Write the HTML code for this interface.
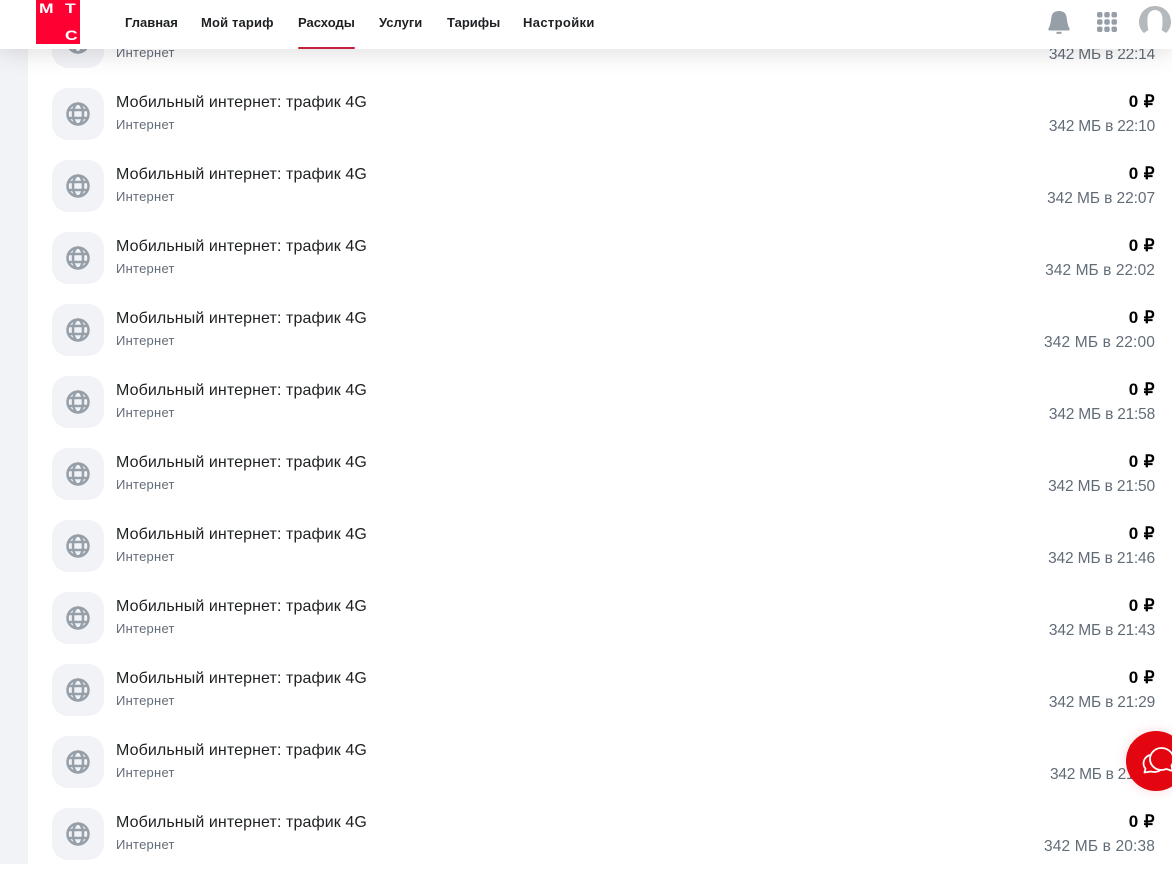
<!DOCTYPE html>
<html lang="ru">
<head>
<meta charset="utf-8">
<title>Расходы</title>
<style>
html,body{margin:0;padding:0;width:1172px;height:864px;overflow:hidden;background:#fff;font-family:"Liberation Sans",sans-serif}
#strip{position:absolute;left:0;top:0;width:28px;height:864px;background:#f2f3f7}
.row{position:absolute;left:0;width:1172px;height:72px}
.ic{position:absolute;left:52px;top:0;width:52px;height:52px;border-radius:16px;background:#f2f3f7}
.ic svg{position:absolute;left:14px;top:14px}
.t{position:absolute;left:116px;top:5px;font-size:16px;line-height:20px;letter-spacing:.1px;color:#1d2023;white-space:nowrap}
.s{position:absolute;left:116px;top:28px;font-size:13px;line-height:18px;letter-spacing:.25px;color:#626c77;white-space:nowrap}
.a{position:absolute;right:17px;top:4px;font-size:17px;line-height:20px;letter-spacing:.4px;font-weight:bold;color:#000;white-space:nowrap}
.m{position:absolute;right:17px;top:29px;font-size:15.5px;line-height:20px;color:#626c77;white-space:nowrap}
#hd{position:absolute;left:0;top:0;width:1172px;height:49px;background:#fff;box-shadow:0 4px 24px rgba(0,0,0,.13)}
#logo{position:absolute;left:36px;top:0;width:44px;height:44px;background:#ff0032;color:#fff;font-weight:bold;font-size:14px;line-height:15px;overflow:hidden}
#logo span{position:absolute;transform:scaleX(1.25);transform-origin:left top}
.n{position:absolute;top:14px;font-size:13px;line-height:18px;font-weight:bold;color:#1d2023;white-space:nowrap}
#ul{position:absolute;left:298px;top:47px;width:57px;height:2px;background:#c5213f;border-radius:1px}
#chat{position:absolute;left:1126px;top:731px;width:60px;height:60px;border-radius:50%;background:#e30611;box-shadow:0 0 12px rgba(227,6,17,.15)}
</style>
</head>
<body>
<div id="strip"></div>

<div class="row" style="top:16px"><div class="ic"><svg width="24" height="24" viewBox="0 0 24 24" fill="none" stroke="#969fa8" stroke-width="2.500"><circle cx="12" cy="12" r="10.500"/><ellipse cx="12" cy="12" rx="5" ry="10.500"/><path d="M2.500 8h19M2.500 16h19"/></svg></div><div class="t">Мобильный интернет: трафик 4G</div><div class="s">Интернет</div><div class="a">0 ₽</div><div class="m" style="letter-spacing:-.2px">342 МБ в 22:14</div></div>
<div class="row" style="top:88px"><div class="ic"><svg width="24" height="24" viewBox="0 0 24 24" fill="none" stroke="#969fa8" stroke-width="2.500"><circle cx="12" cy="12" r="10.500"/><ellipse cx="12" cy="12" rx="5" ry="10.500"/><path d="M2.500 8h19M2.500 16h19"/></svg></div><div class="t">Мобильный интернет: трафик 4G</div><div class="s">Интернет</div><div class="a">0 ₽</div><div class="m" style="letter-spacing:-.2px">342 МБ в 22:10</div></div>
<div class="row" style="top:160px"><div class="ic"><svg width="24" height="24" viewBox="0 0 24 24" fill="none" stroke="#969fa8" stroke-width="2.500"><circle cx="12" cy="12" r="10.500"/><ellipse cx="12" cy="12" rx="5" ry="10.500"/><path d="M2.500 8h19M2.500 16h19"/></svg></div><div class="t">Мобильный интернет: трафик 4G</div><div class="s">Интернет</div><div class="a">0 ₽</div><div class="m" style="letter-spacing:-.07px">342 МБ в 22:07</div></div>
<div class="row" style="top:232px"><div class="ic"><svg width="24" height="24" viewBox="0 0 24 24" fill="none" stroke="#969fa8" stroke-width="2.500"><circle cx="12" cy="12" r="10.500"/><ellipse cx="12" cy="12" rx="5" ry="10.500"/><path d="M2.500 8h19M2.500 16h19"/></svg></div><div class="t">Мобильный интернет: трафик 4G</div><div class="s">Интернет</div><div class="a">0 ₽</div><div class="m" style="letter-spacing:.07px">342 МБ в 22:02</div></div>
<div class="row" style="top:304px"><div class="ic"><svg width="24" height="24" viewBox="0 0 24 24" fill="none" stroke="#969fa8" stroke-width="2.500"><circle cx="12" cy="12" r="10.500"/><ellipse cx="12" cy="12" rx="5" ry="10.500"/><path d="M2.500 8h19M2.500 16h19"/></svg></div><div class="t">Мобильный интернет: трафик 4G</div><div class="s">Интернет</div><div class="a">0 ₽</div><div class="m" style="letter-spacing:.15px">342 МБ в 22:00</div></div>
<div class="row" style="top:376px"><div class="ic"><svg width="24" height="24" viewBox="0 0 24 24" fill="none" stroke="#969fa8" stroke-width="2.500"><circle cx="12" cy="12" r="10.500"/><ellipse cx="12" cy="12" rx="5" ry="10.500"/><path d="M2.500 8h19M2.500 16h19"/></svg></div><div class="t">Мобильный интернет: трафик 4G</div><div class="s">Интернет</div><div class="a">0 ₽</div><div class="m" style="letter-spacing:-.2px">342 МБ в 21:58</div></div>
<div class="row" style="top:448px"><div class="ic"><svg width="24" height="24" viewBox="0 0 24 24" fill="none" stroke="#969fa8" stroke-width="2.500"><circle cx="12" cy="12" r="10.500"/><ellipse cx="12" cy="12" rx="5" ry="10.500"/><path d="M2.500 8h19M2.500 16h19"/></svg></div><div class="t">Мобильный интернет: трафик 4G</div><div class="s">Интернет</div><div class="a">0 ₽</div><div class="m" style="letter-spacing:-.14px">342 МБ в 21:50</div></div>
<div class="row" style="top:520px"><div class="ic"><svg width="24" height="24" viewBox="0 0 24 24" fill="none" stroke="#969fa8" stroke-width="2.500"><circle cx="12" cy="12" r="10.500"/><ellipse cx="12" cy="12" rx="5" ry="10.500"/><path d="M2.500 8h19M2.500 16h19"/></svg></div><div class="t">Мобильный интернет: трафик 4G</div><div class="s">Интернет</div><div class="a">0 ₽</div><div class="m" style="letter-spacing:-.14px">342 МБ в 21:46</div></div>
<div class="row" style="top:592px"><div class="ic"><svg width="24" height="24" viewBox="0 0 24 24" fill="none" stroke="#969fa8" stroke-width="2.500"><circle cx="12" cy="12" r="10.500"/><ellipse cx="12" cy="12" rx="5" ry="10.500"/><path d="M2.500 8h19M2.500 16h19"/></svg></div><div class="t">Мобильный интернет: трафик 4G</div><div class="s">Интернет</div><div class="a">0 ₽</div><div class="m" style="letter-spacing:-.2px">342 МБ в 21:43</div></div>
<div class="row" style="top:664px"><div class="ic"><svg width="24" height="24" viewBox="0 0 24 24" fill="none" stroke="#969fa8" stroke-width="2.500"><circle cx="12" cy="12" r="10.500"/><ellipse cx="12" cy="12" rx="5" ry="10.500"/><path d="M2.500 8h19M2.500 16h19"/></svg></div><div class="t">Мобильный интернет: трафик 4G</div><div class="s">Интернет</div><div class="a">0 ₽</div><div class="m" style="letter-spacing:-.2px">342 МБ в 21:29</div></div>
<div class="row" style="top:736px"><div class="ic"><svg width="24" height="24" viewBox="0 0 24 24" fill="none" stroke="#969fa8" stroke-width="2.500"><circle cx="12" cy="12" r="10.500"/><ellipse cx="12" cy="12" rx="5" ry="10.500"/><path d="M2.500 8h19M2.500 16h19"/></svg></div><div class="t">Мобильный интернет: трафик 4G</div><div class="s">Интернет</div><div class="a">0 ₽</div><div class="m" style="letter-spacing:-.28px">342 МБ в 21:15</div></div>
<div class="row" style="top:808px"><div class="ic"><svg width="24" height="24" viewBox="0 0 24 24" fill="none" stroke="#969fa8" stroke-width="2.500"><circle cx="12" cy="12" r="10.500"/><ellipse cx="12" cy="12" rx="5" ry="10.500"/><path d="M2.500 8h19M2.500 16h19"/></svg></div><div class="t">Мобильный интернет: трафик 4G</div><div class="s">Интернет</div><div class="a">0 ₽</div><div class="m" style="letter-spacing:.15px">342 МБ в 20:38</div></div>

<div id="hd">
  <div id="logo"><span style="left:3px;top:1px">М</span><span style="left:29px;top:1px">Т</span><span style="left:29px;top:28px">С</span></div>
  <div class="n" style="left:125px">Главная</div>
  <div class="n" style="left:201px;letter-spacing:.15px">Мой тариф</div>
  <div class="n" style="left:298px">Расходы</div>
  <div class="n" style="left:379px">Услуги</div>
  <div class="n" style="left:447px">Тарифы</div>
  <div class="n" style="left:523px;letter-spacing:.35px">Настройки</div>
  <div id="ul"></div>
  <svg style="position:absolute;left:1048px;top:11px" width="22" height="23" viewBox="0 0 22 23"><path d="M11 0C6 0 3.800 2.500 3.300 7C2.800 11.500 2 15 .500 17.500C0 18.800 .500 19.500 2 19.500H20C21.500 19.500 22 18.800 21.500 17.500C20 15 19.200 11.500 18.700 7C18.200 2.500 16 0 11 0Z" fill="#969fa8"/><rect x="8.500" y="20.800" width="5" height="2" fill="#969fa8"/></svg>
  <svg style="position:absolute;left:1097px;top:12px" width="20" height="20" viewBox="0 0 20 20" fill="#969fa8"><rect x="0" y="0" width="5.500" height="5.500" rx="2"/><rect x="7.250" y="0" width="5.500" height="5.500" rx="2"/><rect x="14.500" y="0" width="5.500" height="5.500" rx="2"/><rect x="0" y="7.250" width="5.500" height="5.500" rx="2"/><rect x="7.250" y="7.250" width="5.500" height="5.500" rx="2"/><rect x="14.500" y="7.250" width="5.500" height="5.500" rx="2"/><rect x="0" y="14.500" width="5.500" height="5.500" rx="2"/><rect x="7.250" y="14.500" width="5.500" height="5.500" rx="2"/><rect x="14.500" y="14.500" width="5.500" height="5.500" rx="2"/></svg>
  <svg style="position:absolute;left:1138px;top:5px" width="34" height="30" viewBox="0 0 34 30"><path d="M6 28C2.500 25 1 21 1 17C1 8 8 1 17 1C26 1 33 8 33 17C33 21 31.500 25 28 28L23.500 25C24.500 22 24.500 20 24.500 14C24.500 8 21 5 17 5C13 5 9.500 8 9.500 14C9.500 20 9.500 22 10.500 25Z" fill="#b4b9be"/></svg>
</div>

<div id="chat">
  <svg style="position:absolute;left:16px;top:16px" width="34" height="30" viewBox="0 0 34 30" fill="none" stroke="#fff" stroke-width="1.800" stroke-linejoin="round"><path d="M8 8C3.500 9.500 1.500 13 1.500 16.500C1.500 18.500 2.500 20.500 3.500 21.500L2.500 25.500L9 24.500C12 25.500 16 25 18.500 23"/><path d="M19.500 1C13 1 8 6 8 12C8 18 13 23 19.500 23C21.500 23 23 22.500 24.500 22L30.500 24L29.500 18.500C31 16.500 31.500 14.500 31.500 12C31.500 6 26 1 19.500 1Z"/></svg>
</div>
</body>
</html>
